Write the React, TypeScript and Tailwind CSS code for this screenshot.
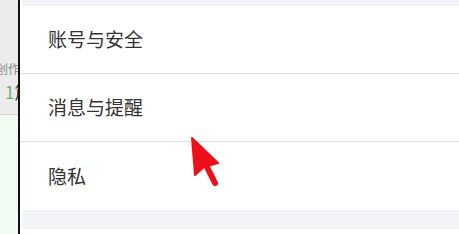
import React from 'react';

const rows = ['账号与安全', '消息与提醒', '隐私'];

const SideStrip: React.FC = () => (
  <div className="w-[18px] h-full overflow-hidden flex flex-col shrink-0">
    <div className="h-[115px] bg-[#ececec] border-b border-[#d6d6d6] flex flex-col">
      <div className="w-[70px] -ml-[4px] mt-[62px] text-[12px] leading-[14px] text-[#8a8a8a] whitespace-nowrap">创作</div>
      <div className="w-[70px] ml-[5px] mt-[6px] text-[17px] leading-[20px] whitespace-nowrap">
        <span className="text-[#6ab56a]">1</span>
        <span className="text-[#333]">篇</span>
      </div>
    </div>
    <div className="flex-1 bg-[#f2fbf2]" />
  </div>
);

const SettingRow: React.FC<{ label: string; last?: boolean }> = ({ label, last }) => (
  <div className={`h-[68px] flex items-center pl-[28px] bg-white ${last ? '' : 'border-b border-[#dedede]'}`}>
    <span className="text-[19px] text-[#333]">{label}</span>
  </div>
);

const App: React.FC = () => {
  return (
    <div
      className="relative w-[459px] h-[234px] flex overflow-hidden bg-white"
      style={{ fontFamily: '"Noto Sans CJK SC", "Noto Sans", sans-serif' }}
    >
      <SideStrip />
      <div className="w-[2px] h-full bg-[#111]" />
      <div className="flex-1 flex flex-col bg-white">
        <div className="h-[6px] bg-[#f2f4f7] ml-[2px]" />
        {rows.map((r, i) => (
          <SettingRow key={r} label={r} last={i === rows.length - 1} />
        ))}
        <div className="h-[19px] bg-[#f2f4f7] ml-[2px]" />
        <div className="flex-1 bg-white" />
      </div>
      <svg className="absolute left-0 top-0 pointer-events-none" width="459" height="234">
        <polygon points="192,138 195,175 204,167 218,163" fill="#ec1018" stroke="#ec1018" strokeWidth="2" strokeLinejoin="round" />
        <line x1="206" y1="165" x2="215" y2="183" stroke="#ec1018" strokeWidth="6" strokeLinecap="round" />
      </svg>
    </div>
  );
};

export default App;
